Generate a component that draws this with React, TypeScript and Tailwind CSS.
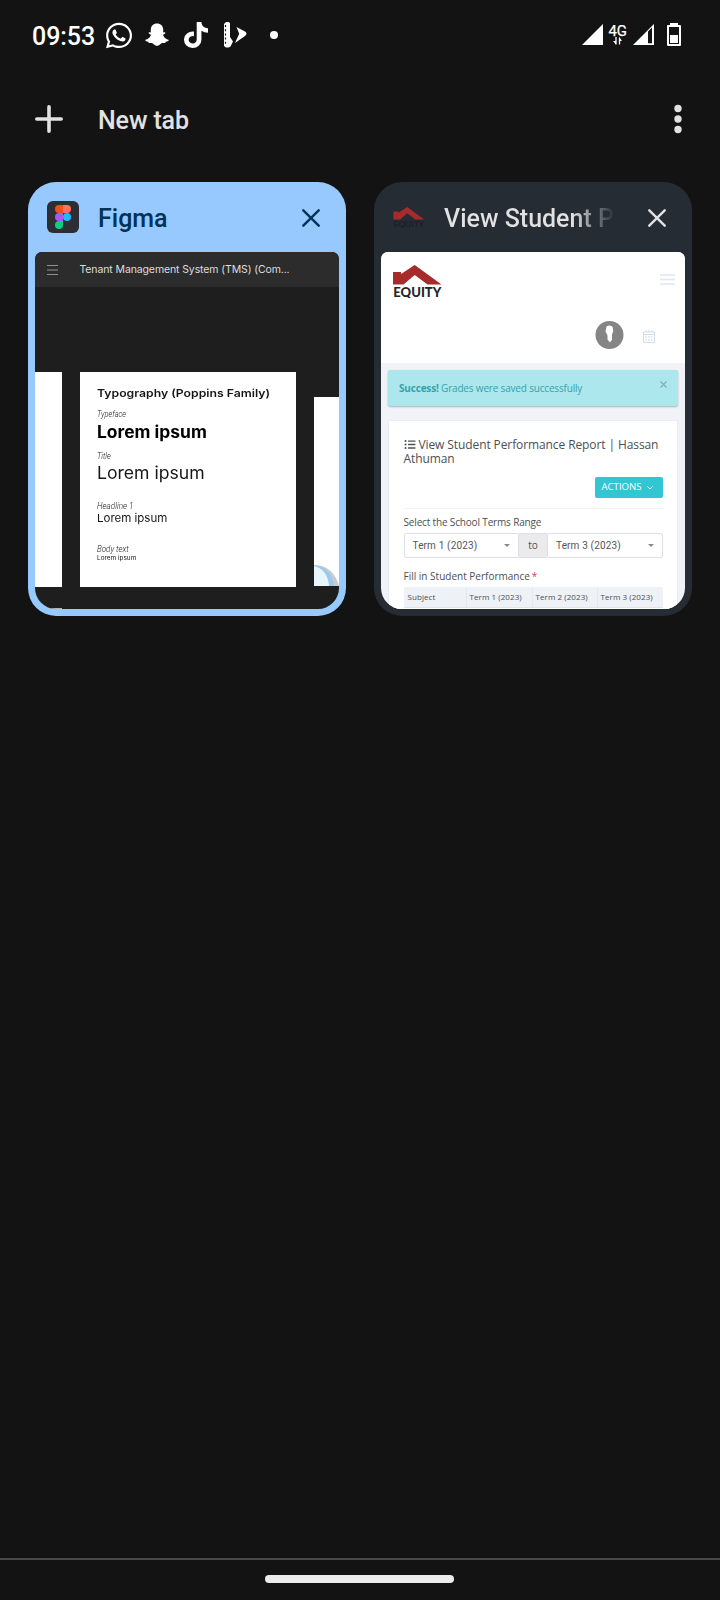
import type { ReactNode } from "react";
import { FaListUl, FaSnapchatGhost, FaTiktok, FaWhatsapp } from "react-icons/fa";

function StatusBar() {
  return (
    <header className="flex h-[70px] items-center pl-8 pr-[38px] text-white">
      <span className="mt-[3px] w-[74px] font-['Roboto'] text-[25px] leading-[30px] font-medium tracking-[-0.05px] whitespace-nowrap">09:53</span>
      <FaWhatsapp className="h-[29px] w-[26px]" preserveAspectRatio="none" />
      <svg className="ml-[13px] h-6 w-6" viewBox="0 0 24 24" fill="currentColor">
        <path d="M12 .5c3.700 0 6.200 2.400 6.200 6.200v2.600c.8.300 1.500-.4 2 .2.500.8-.7 1.500-1.700 1.900-.5.300-.4.800-.1 1.400 1 2.100 2.700 3.500 5.100 4 .7.500-.2 1.400-2.700 1.900-.5.400-.2 1.300-.8 1.400-1.200.1-2.500-.3-3.800.5-1.300.9-2.300 2.300-4.200 2.300s-2.900-1.400-4.200-2.300C6.500 19.800 5.200 20.200 4 20.100c-.6-.1-.3-1-.8-1.400-2.500-.5-3.400-1.400-2.700-1.900 2.400-.5 4.100-1.900 5.100-4 .3-.6.400-1.100-.1-1.400-1-.4-2.200-1.100-1.700-1.900.5-.6 1.200.1 2-.2V6.700C5.800 2.900 8.300.5 12 .5z" />
      </svg>
      <FaTiktok className="ml-[15px] h-[26px] w-[24px]" preserveAspectRatio="none" />
      <svg className="ml-[15px] h-[26px] w-6" viewBox="0 0 24 26" fill="currentColor">
        <path d="M3 0h2.500l1.500 1v14l3 4.500-2.500 5-2 1H3l-2-1.500V2z" />
        <path d="M13.500 5 22 9.500c2 1.200 2 3 0 4.500L12 21l4.200-9.200z" />
        <path d="M2.500 3v20" stroke="#131313" strokeWidth="1.200" strokeDasharray="2 2.200" />
      </svg>
      <span className="ml-[23px] size-2 rounded-full bg-white" />
      <svg className="ml-auto h-6 w-[100px]" viewBox="582 23 100 24" fill="#fff">
        <path d="M582 45 603 24V45z" />
        <path d="M616 37v7.500M619.500 37.500v7" stroke="#fff" strokeWidth="1.300" />
        <path d="m613 41 3 3.500V41zM619.500 37.500 622 41h-2.500z" />
        <text x="608.500" y="36" fontFamily="Roboto" fontSize="15.500" stroke="#fff" strokeWidth=".25" textLength="18.500" lengthAdjust="spacingAndGlyphs">4G</text>
        <path fillRule="evenodd" d="M633 45 654 24V45zM648 31.500V43.300h4V27.500z" />
        <path fillRule="evenodd" d="M668 25h2v-2h8v2h2q1 0 1 1v19q0 1-1 1h-12q-1 0-1-1V26q0-1 1-1zm1 2v17h10V27z" />
        <path d="M670 35h8v8h-8z" />
      </svg>
    </header>
  );
}

function Toolbar() {
  return (
    <div className="flex h-[112px] items-start pl-[35px] pr-[38px] pt-[35px] text-[#e2e2e2]">
      <svg className="size-7" viewBox="0 0 28 28" stroke="currentColor" strokeWidth="3.600" strokeLinecap="round">
        <path d="M14 1.800v24.400M1.800 14h24.400" />
      </svg>
      <span className="mt-px ml-[35px] font-['Roboto'] text-[25px] leading-[30px] font-medium tracking-[-0.12px]">New tab</span>
      <svg className="ml-auto h-7 w-[8px] overflow-visible" viewBox="0 0 8 28" fill="currentColor">
        <circle cx="4" cy="3.500" r="3.700" />
        <circle cx="4" cy="14" r="3.700" />
        <circle cx="4" cy="24.500" r="3.700" />
      </svg>
    </div>
  );
}

function CloseIcon() {
  return (
    <svg className="mt-px ml-auto size-[18px]" viewBox="0 0 18 18" stroke="currentColor" strokeWidth="2.400" strokeLinecap="round">
      <path d="m1.300 1.300 15.400 15.400M16.700 1.300 1.300 16.700" />
    </svg>
  );
}

function TabCard({ tone, icon, title, children }: { tone: string; icon: ReactNode; title: ReactNode; children: ReactNode }) {
  return (
    <article className={`flex h-[434px] w-[318px] flex-col rounded-[28px] px-[7px] pb-[7px] ${tone}`}>
      <div className="flex h-[70px] items-center pl-3 pr-[19px]">
        {icon}
        {title}
        <CloseIcon />
      </div>
      <div className="h-[357px] overflow-hidden rounded-t-[7px] rounded-b-[21px]">{children}</div>
    </article>
  );
}

function FigmaIcon() {
  return (
    <svg className="size-8 shrink-0" viewBox="0 0 32 32">
      <rect width="32" height="32" rx="6" fill="#2c2d35" />
      <path d="M12 4h4v8h-4a4 4 0 0 1 0-8z" fill="#f24e1e" />
      <path d="M16 4h-0h4a4 4 0 0 1 0 8h-4z" fill="#ff7262" />
      <path d="M12 12h4v8h-4a4 4 0 0 1 0-8z" fill="#a259ff" />
      <circle cx="20" cy="16" r="4" fill="#1abcfe" />
      <path d="M12 20h4v4a4 4 0 1 1-4-4z" fill="#0acf83" />
    </svg>
  );
}

function FigmaPreview() {
  return (
    <div className="flex h-full flex-col bg-[#1e1e1e]">
      <div className="flex h-[35px] items-center bg-[#2c2c2c] pl-3">
        <svg className="h-[10px] w-[11px]" viewBox="0 0 11 10" stroke="#929292" strokeWidth="1">
          <path d="M0 .5h11M0 5h11M0 9.500h11" />
        </svg>
        <span className="mt-px ml-[21.5px] font-['Inter'] text-[10.5px] tracking-[-0.11px] whitespace-nowrap text-[#dedede]">Tenant Management System (TMS) (Com...</span>
      </div>
      <div className="mt-[85px] flex h-[215px] items-start">
        <div className="h-[215px] w-[26.500px] bg-white" />
        <div className="ml-[18.5px] flex h-[215px] w-[215.500px] flex-col bg-white pl-[17px] whitespace-nowrap text-[#161616]">
          <p className="mt-[13px] h-[17px] w-fit origin-left scale-x-[1.165] font-['Inter'] text-[10.5px] leading-[17px] font-semibold">Typography (Poppins Family)</p>
          <p className="mt-[6px] h-[13px] w-fit origin-left scale-x-[0.88] scale-y-[1.060] font-['Roboto'] text-[8.5px] leading-[13px] font-light italic">Typeface</p>
          <p className="mt-px h-[20px] w-fit origin-left scale-x-[1.025] font-['Inter'] text-[17px] leading-[20px] font-bold text-black">Lorem ipsum</p>
          <p className="mt-[8px] h-[13px] w-fit origin-left scale-x-[0.88] scale-y-[1.060] font-['Roboto'] text-[8.5px] leading-[13px] font-light italic">Title</p>
          <p className="h-[20px] w-fit origin-left scale-x-[1.035] font-['Inter'] text-[17px] leading-[20px]">Lorem ipsum</p>
          <p className="mt-[17px] h-[13px] w-fit origin-left scale-x-[0.95] scale-y-[1.060] font-['Roboto'] text-[8.5px] leading-[13px] font-light italic">Headline 1</p>
          <p className="-mt-px h-[13px] w-fit origin-left scale-x-[1.045] font-['Inter'] text-[11px] leading-[13px]">Lorem ipsum</p>
          <p className="mt-[18px] h-[13px] w-fit origin-left scale-x-[0.94] scale-y-[1.060] font-['Roboto'] text-[8.5px] leading-[13px] font-light italic">Body text</p>
          <p className="-mt-[2px] h-[7px] w-fit origin-left scale-x-[1.070] font-['Inter'] text-[6px] leading-[7px]">Lorem ipsum</p>
        </div>
        <div className="mt-[25px] ml-[18.500px] flex h-[189px] w-[25px] items-end overflow-hidden bg-white">
          <svg className="h-[21px] w-[25px]" viewBox="0 0 25 21">
            <path d="M0 0C14 0 22 9 25 21H0z" fill="#c6ced3" />
            <path d="M0 0C12 1 19 9 20 21H0z" fill="#a1c8e8" />
            <path d="M0 1C9 3 14 10 15 21H0z" fill="#e6f7fe" />
          </svg>
        </div>
      </div>
      <div className="mt-auto h-px w-[27px] bg-[#b9b2ae]" />
    </div>
  );
}

function EquityLogo({ className, ink }: { className: string; ink: string }) {
  return (
    <svg className={className} viewBox="0 0 49 33">
      <path d="M0 7h8v2l13.700-9L48.500 19.500H34.500L21.700 10 10.500 19.500H0z" fill="#a72b2b" />
      <text x=".3" y="32" fontFamily="Lato" fontWeight="900" fontSize="12.500" fill={ink} textLength="48" lengthAdjust="spacingAndGlyphs">EQUITY</text>
    </svg>
  );
}

function Select({ children }: { children: ReactNode }) {
  return (
    <div className="flex h-[25px] flex-1 items-center justify-between rounded-[2px] border border-[#dde0e5] bg-white pl-[8px] pr-[8px] font-['Roboto'] text-[10px] tracking-[0.15px] text-[#555]">
      <span>{children}</span>
      <svg className="h-[3px] w-[6px]" viewBox="0 0 6 3"><path d="M0 0h6L3 3z" fill="#8a8a8a" /></svg>
    </div>
  );
}

function ReportPreview() {
  return (
    <div className="flex h-full flex-col bg-[#f1f3f8] font-['Open_Sans'] whitespace-nowrap">
      <div className="flex h-[111px] flex-col bg-white pl-3">
        <div className="flex h-[58px] items-start justify-between pr-[10px] pt-[13px]">
          <EquityLogo className="h-[33px] w-[49px]" ink="#252525" />
          <svg className="mt-[9px] h-[11px] w-[15px]" viewBox="0 0 15 11" stroke="#e1e5ed" strokeWidth="1.700">
            <path d="M0 1h15M0 5.500h15M0 10h15" />
          </svg>
        </div>
        <div className="flex items-center justify-end pr-[30.500px] pt-[10px]">
          <svg className="size-[29px]" viewBox="0 0 29 29">
            <circle cx="14.500" cy="15" r="14" fill="#858585" />
            <path d="M11.500 6.500q3-2 6 .2l.8 4-1.300 4v5L15 22.500l-1.700-2-.8-1v-4l-2-4z" fill="#fff" />
          </svg>
          <svg className="ml-[19px] mt-[3px] h-[13px] w-[12px]" viewBox="0 0 12 13" fill="none" stroke="#d2dde7">
            <path d="M.5 2h11v10.500H.5zM.5 4.500h11M3 0v2M6 0v2M9 0v2" />
            <path d="M2.500 7h7M2.500 10h7" strokeDasharray="1.500 1.200" strokeWidth="1.400" />
          </svg>
        </div>
      </div>
      <div className="mx-[7px] mt-[7px] flex h-[36px] items-start justify-between rounded-[2px] bg-[#abe7ed] pl-[11px] pr-[11px] shadow-[0_1px_2px_#9fb8bf]">
        <p className="mt-[9.500px] text-[10px] leading-[16px] tracking-[-0.18px] text-[#36a3ab]"><b>Success!</b> Grades were saved successfully</p>
        <svg className="mt-[11px] size-[7px]" viewBox="0 0 7 7" stroke="#80b1b7" strokeWidth="1.300"><path d="m.5.5 6 6m0-6-6 6" /></svg>
      </div>
      <div className="mx-[8px] mt-[15px] flex flex-1 flex-col bg-white px-[14.500px] text-[#4b4f54] shadow-[0_0_2px_#dde1e8]">
        <h2 className="mt-[17px] h-[29px] text-[12px] leading-[14px] tracking-[-0.1px]">
          <FaListUl className="mr-[3px] inline h-[11px] w-[12px] align-[-1px]" />View Student Performance Report | Hassan<br />Athuman
        </h2>
        <div className="mt-[10px] flex h-[21px] w-[68px] items-center self-end rounded-[2px] bg-[#32c5d2] pl-[7px] text-[9.600px] text-white">
          <span>ACTIONS</span>
          <svg className="ml-[5px] h-[4px] w-[6px]" viewBox="0 0 6 4" fill="none" stroke="#fff"><path d="m.5.5 2.500 2.500L5.500.5" /></svg>
        </div>
        <div className="mt-[10px] h-px shrink-0 bg-[#f1f3f5]" />
        <p className="mt-[5px] h-[16px] text-[10px] leading-[16px] tracking-[-0.16px]">Select the School Terms Range</p>
        <div className="mt-[3px] flex h-[25px] w-[259px]">
          <Select>Term 1 (2023)</Select>
          <div className="flex w-[28px] items-center justify-center border-y border-[#dedfe1] bg-[#ebebed] text-[10px]">to</div>
          <Select>Term 3 (2023)</Select>
        </div>
        <p className="mt-[10px] h-[16px] text-[10px] leading-[16px]">Fill in Student Performance<span className="ml-[2px] text-[#e73d4a]">*</span></p>
        <div className="mt-[3px] grid h-[21px] w-[259px] shrink-0 grid-cols-[62px_66px_65px_66px] border-b border-[#dfe4e9] bg-[#eef1f5] text-[8px] leading-[19px] tracking-[0.07px]">
          <span className="pl-[4px]">Subject</span>
          <span className="border-l border-[#e5e9ed] pl-[3px]">Term 1 (2023)</span>
          <span className="border-l border-[#e5e9ed] pl-[3px]">Term 2 (2023)</span>
          <span className="border-l border-[#e5e9ed] pl-[3px]">Term 3 (2023)</span>
        </div>
      </div>
    </div>
  );
}

export default function App() {
  return (
    <main className="flex h-[1600px] w-[720px] flex-col overflow-hidden bg-[#131313]">
      <StatusBar />
      <Toolbar />
      <section className="flex gap-7 px-7">
        <TabCard tone="bg-[#97c9ff] text-[#003355]" icon={<FigmaIcon />} title={<h1 className="mt-[3px] ml-[19px] font-['Roboto'] text-[25px] leading-[30px] font-medium">Figma</h1>}>
          <FigmaPreview />
        </TabCard>
        <TabCard
          tone="bg-[#252c34] text-[#e2e2e2]"
          icon={<EquityLogo className="mt-px h-[21px] w-8 shrink-0" ink="#1c1f24" />}
          title={<h1 className="mt-[3px] ml-[19px] w-[171px] shrink-0 overflow-hidden bg-linear-to-r from-[#e2e2e2] from-75% to-transparent bg-clip-text font-['Roboto'] text-[25px] leading-[30px] font-medium whitespace-nowrap text-transparent">View Student Performance</h1>}
        >
          <ReportPreview />
        </TabCard>
      </section>
      <footer className="mt-auto flex h-[42px] items-start justify-center border-t-2 border-[#484848] pt-[15px] pr-[2px]">
        <div className="h-2 w-[189px] rounded-full bg-[#ececec]" />
      </footer>
    </main>
  );
}
